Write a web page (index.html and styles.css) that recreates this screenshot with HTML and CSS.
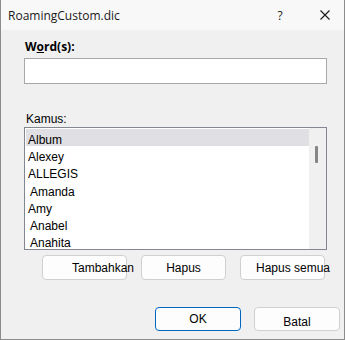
FILE: index.html
```html
<!DOCTYPE html>
<html lang="id">
<head>
    <meta charset="UTF-8">
    <title>RoamingCustom.dic</title>
    <link rel="stylesheet" href="styles.css">
</head>
<body>
    <div class="dialog">
        <div class="titlebar">
            <span class="title">RoamingCustom.dic</span>
            <span class="help">?</span>
            <svg class="close" width="10" height="10" viewBox="0 0 10 10">
                <path d="M0.5 0.5 L9.5 9.5 M9.5 0.5 L0.5 9.5" stroke="#1a1a1a" stroke-width="1.1" fill="none"/>
            </svg>
        </div>

        <div class="content">
            <label class="word-label" for="word">W<u>o</u>rd(s):</label>
            <input class="word-input" id="word" type="text">

            <div class="list-label">Kamus:</div>
            <div class="listbox">
                <ul class="items">
                    <li class="selected">Album</li>
                    <li>Alexey</li>
                    <li>ALLEGIS</li>
                    <li class="shift">Amanda</li>
                    <li>Amy</li>
                    <li class="shift">Anabel</li>
                    <li class="shift">Anahita</li>
                </ul>
                <div class="scrollbar">
                    <div class="thumb"></div>
                </div>
            </div>

            <div class="actions">
                <button class="btn btn-add">Tambahkan</button>
                <button class="btn">Hapus</button>
                <button class="btn btn-clear">Hapus semua</button>
            </div>
        </div>

        <div class="footer">
            <button class="btn btn-ok">OK</button>
            <button class="btn btn-cancel">Batal</button>
        </div>
    </div>
</body>
</html>
```

FILE: styles.css
```css
body {
    margin: 0;
    padding: 0;
    background-color: #f0f0f0;
}
.dialog {
    width: 345px;
    height: 340px;
    box-sizing: border-box;
    border: 1px solid #8c8c8c;
    border-top: none;
    background-color: #f0f0f0;
    font-family: "Liberation Sans", Arial, sans-serif;
    font-size: 12px;
    color: #000;
}
.titlebar {
    height: 30px;
    display: flex;
    align-items: center;
    background-color: #f8f8f8;
    padding: 0 14px 0 7px;
}
.title {
    font-family: "Open Sans", sans-serif;
    font-size: 12px;
    color: #1a1a1a;
}
.help {
    margin-left: auto;
    width: 12px;
    text-align: center;
    font-family: "Open Sans", sans-serif;
    font-size: 12px;
    color: #1a1a1a;
}
.close {
    margin-left: 34px;
    display: block;
}
.content {
    padding-left: 23px;
}
.word-label {
    display: block;
    margin-top: 9px;
    height: 19px;
    line-height: 16px;
    padding-left: 1px;
    font-family: "Open Sans", sans-serif;
    font-weight: 700;
    font-size: 12px;
}
.word-label u {
    text-decoration-thickness: 1px;
}
.word-input {
    display: block;
    width: 303px;
    height: 26px;
    box-sizing: border-box;
    margin: 0;
    border: 1px solid #a8a8a8;
    background: #fff;
    outline: none;
}
.list-label {
    margin-top: 27px;
    height: 16px;
    line-height: 17px;
    padding-left: 2px;
}
.listbox {
    display: flex;
    width: 303px;
    height: 123px;
    box-sizing: border-box;
    border: 1px solid #828790;
    background: #fff;
}
.items {
    flex: 1;
    list-style: none;
    margin: 0;
    padding: 1px 0 0 1px;
    overflow: hidden;
}
.items li {
    height: 17.2px;
    line-height: 22px;
    padding-left: 2px;
    white-space: nowrap;
}
.items li.selected {
    background-color: #e0dfe3;
}
.items li.shift {
    padding-left: 4px;
}
.scrollbar {
    width: 17px;
    background-color: #f0f0f0;
    position: relative;
}
.thumb {
    position: absolute;
    left: 6px;
    top: 18px;
    width: 3px;
    height: 17px;
    border-radius: 1px;
    background-color: #858585;
}
.actions {
    display: flex;
    gap: 14px;
    margin-top: 5px;
    padding-left: 18px;
}
.btn {
    height: 25px;
    width: 85px;
    margin: 0;
    padding: 0;
    box-sizing: border-box;
    border: 1px solid #d0d0d0;
    border-radius: 4px;
    background-color: #fdfdfd;
    font-family: "Liberation Sans", Arial, sans-serif;
    font-size: 12px;
    color: #000;
    white-space: nowrap;
    overflow: visible;
}
.btn-add {
    text-align: left;
    padding-left: 29px;
}
.btn-clear {
    text-align: left;
    padding-left: 15px;
}
.footer {
    display: flex;
    justify-content: flex-end;
    gap: 13px;
    margin-top: 27px;
    padding-right: 4px;
}
.footer .btn {
    width: 86px;
    height: 24px;
}
.btn-ok {
    border-color: #0067c0;
}
.btn-cancel {
    padding-top: 6px;
}
```
